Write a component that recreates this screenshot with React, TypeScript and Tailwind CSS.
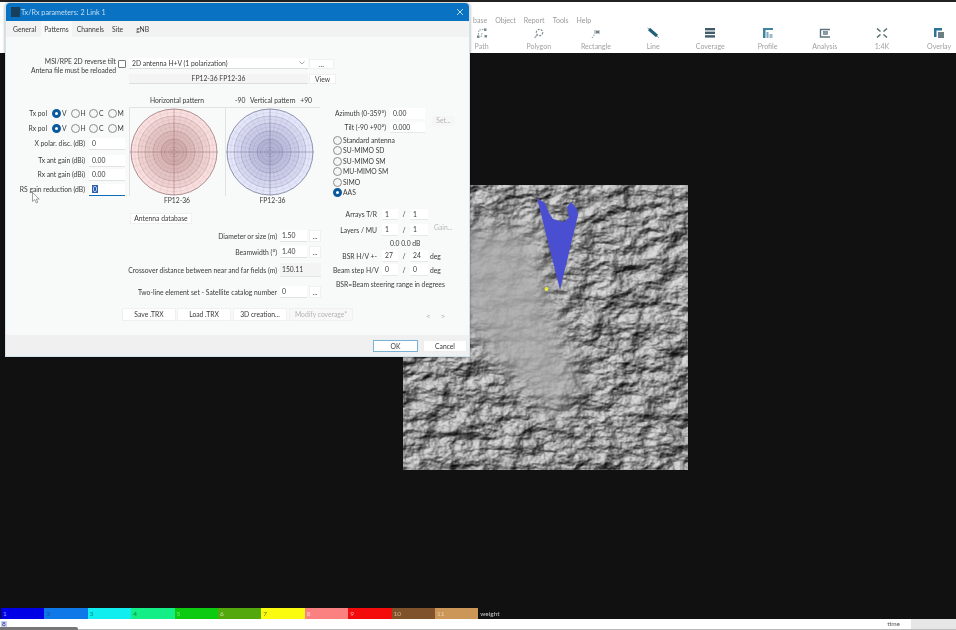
import React from "react";

const font = { fontFamily: 'Lato, "Open Sans", sans-serif' };

const spokes = Array.from({ length: 36 }, (_, i) => (i * Math.PI * 2) / 36);

function PolarPlot({ base, dark, line }: { base: string; dark: string; line: string }) {
  return (
    <svg width="88" height="88" viewBox="-44 -44 88 88" className="block">
      <circle r="43" fill={base} />
      {[36, 29, 21, 13].map((r) => (
        <circle key={r} r={r} fill={dark} fillOpacity="0.11" />
      ))}
      {spokes.map((a, i) => (
        <line
          key={i}
          x1={Math.cos(a) * 7}
          y1={Math.sin(a) * 7}
          x2={Math.cos(a) * 43}
          y2={Math.sin(a) * 43}
          stroke={line}
          strokeOpacity="0.16"
          strokeWidth="0.5"
        />
      ))}
      {[39.5, 32.5, 25, 17, 9.5].map((r) => (
        <circle key={r} r={r} fill="none" stroke={line} strokeOpacity="0.16" strokeWidth="0.5" />
      ))}
      {[36, 29, 21, 13, 5, 2.5].map((r) => (
        <circle key={r} r={r} fill="none" stroke={line} strokeOpacity="0.42" strokeWidth="0.5" />
      ))}
      <circle r="43" fill="none" stroke={line} strokeOpacity="0.75" strokeWidth="0.7" />
      <line x1="-44" x2="44" y1="0" y2="0" stroke={line} strokeOpacity="0.5" strokeWidth="0.5" />
      <line x1="0" x2="0" y1="-43" y2="43" stroke={line} strokeOpacity="0.5" strokeWidth="0.5" />
    </svg>
  );
}

function Dot({ on }: { on?: boolean }) {
  return (
    <span
      className={
        on
          ? "w-[9px] h-[9px] shrink-0 rounded-full border-[3px] border-[#0b5a9e] bg-white"
          : "w-[9px] h-[9px] shrink-0 rounded-full border border-[#8c8c8c] bg-[#f6f6f6]"
      }
    />
  );
}

function PolRow({ label }: { label: string }) {
  return (
    <div className="flex items-center h-[13px]">
      <span className="w-[41px] text-right">{label}</span>
      <span className="w-[5px]" />
      {["V", "H", "C", "M"].map((m, i) => (
        <span key={m} className="w-[18.5px] flex items-center gap-[1px]">
          <Dot on={i === 0} />
          {m}
        </span>
      ))}
    </div>
  );
}

function GainRow({ label, value, active }: { label: string; value: string; active?: boolean }) {
  return (
    <div className="flex items-center justify-end gap-[4px] h-[13px] pr-[1px]">
      <span className="whitespace-nowrap">{label}</span>
      <span className={`w-[36px] h-[12px] bg-white pl-[3px] flex items-center border-b ${active ? "border-[#0b6cb8]" : "border-[#e2e2e2]"}`}>
        {active ? <span className="bg-[#2a5fb0] text-white px-[1px] leading-[8px]">{value}</span> : value}
      </span>
    </div>
  );
}

function Btn({ label, w, h = "h-[13px]", dim }: { label: string; w: string; h?: string; dim?: boolean }) {
  return (
    <span className={`${w} ${h} shrink-0 flex items-center justify-center border border-[#f0f0f0] ${dim ? "text-[#b4b4b4] bg-[#f8f8f8]" : "bg-white"}`}>
      {label}
    </span>
  );
}

function SizeRow({ label, value, className }: { label: string; value: string; className: string }) {
  return (
    <div className={`flex items-center gap-[3px] h-[12px] ${className}`}>
      <span className="whitespace-nowrap">{label}</span>
      <span className="w-[27px] h-[12px] bg-white border-b border-[#e2e2e2] pl-[2px] flex items-center">{value}</span>
      <span className="ml-[-1px]">
        <Btn label="..." w="w-[12px]" h="h-[12px]" />
      </span>
    </div>
  );
}

function ArrayRow({
  label,
  a,
  b,
  h,
  className,
  tail,
}: {
  label: string;
  a: string;
  b: string;
  h: string;
  className?: string;
  tail?: React.ReactNode;
}) {
  return (
    <div className={`flex items-center ${h} ${className ?? ""}`}>
      <span className="w-[44px] text-right whitespace-nowrap">{label}</span>
      <span className={`ml-[5px] w-[16px] ${h} bg-white border-b border-[#e8e8e8] pl-[3px] flex items-center`}>{a}</span>
      <span className="w-[12px] text-center">/</span>
      <span className={`w-[18px] ${h} bg-white border-b border-[#e8e8e8] pl-[3px] flex items-center`}>{b}</span>
      {tail}
    </div>
  );
}

const tools: { label: string; icon: React.ReactNode }[] = [
  {
    label: "Path",
    icon: (
      <g fill="#7b8a90">
        <path d="M3 10 L4 3 L10 2 M6 10 L7 6" fill="none" stroke="#8b989d" strokeWidth="1" strokeDasharray="1.5 1" />
        <rect x="2" y="8.5" width="2.5" height="2.5" />
        <rect x="9" y="1.5" width="2.5" height="2.5" />
        <rect x="9.5" y="8" width="2.5" height="2.5" />
      </g>
    ),
  },
  {
    label: "Polygon",
    icon: (
      <g fill="none">
        <circle cx="7.5" cy="5.5" r="3.2" stroke="#7b8a90" strokeWidth="1.2" strokeDasharray="2 1.2" />
        <path d="M2.5 11 L5 8" stroke="#a2adb1" strokeWidth="1.2" />
      </g>
    ),
  },
  {
    label: "Rectangle",
    icon: (
      <g>
        <rect x="5" y="3" width="6" height="4" fill="#c3cacd" />
        <rect x="7" y="4" width="3" height="2" fill="#6f7f85" />
        <path d="M3 11 L6 7" stroke="#a2adb1" strokeWidth="1.2" strokeDasharray="1.5 1" />
      </g>
    ),
  },
  {
    label: "Line",
    icon: (
      <g>
        <path d="M3 2 L11 9" stroke="#1f5f78" strokeWidth="3" />
        <path d="M1.5 1 L3 2 M11 9 L13 11" stroke="#8aa3ad" strokeWidth="1" />
      </g>
    ),
  },
  {
    label: "Coverage",
    icon: (
      <g fill="#3f5c68">
        <rect x="2" y="1" width="10" height="2.4" />
        <rect x="2" y="4.6" width="10" height="2.4" />
        <rect x="2" y="8.2" width="10" height="2.4" />
      </g>
    ),
  },
  {
    label: "Profile",
    icon: (
      <g fill="#3f85a0">
        <rect x="2" y="1" width="10" height="2" />
        <rect x="2" y="3" width="2.5" height="8" />
        <rect x="5.5" y="5" width="2" height="6" fill="#7ea9ba" />
        <rect x="8.5" y="7" width="3" height="4" fill="#9dbcc9" />
      </g>
    ),
  },
  {
    label: "Analysis",
    icon: (
      <g fill="none" stroke="#5c747d">
        <path d="M12 2.5 H2.5 V10 H12" strokeWidth="1.4" />
        <rect x="5.5" y="4.5" width="4" height="3" fill="#8a9ca3" strokeWidth="0.6" />
      </g>
    ),
  },
  {
    label: "1:4K",
    icon: (
      <g fill="none" stroke="#55686f" strokeWidth="1.5">
        <path d="M2 1.5 L5.5 4.5 M12 1.5 L8.5 4.5 M2 10.5 L5.5 7.5 M12 10.5 L8.5 7.5" />
      </g>
    ),
  },
  {
    label: "Overlay",
    icon: (
      <g>
        <path d="M2 1 H10 V3.5 H4.5 V10 H2 Z" fill="#2c7496" />
        <rect x="6" y="5" width="6" height="6" fill="#6d7d84" />
      </g>
    ),
  },
];

const legend = [
  ["1", "bg-[#0000e6]", "text-[#8fa0ff]"],
  ["2", "bg-[#0f78e8]", "text-[#1a4fa0]"],
  ["3", "bg-[#10eef0]", "text-[#0b7f80]"],
  ["4", "bg-[#14ee86]", "text-[#0a7f48]"],
  ["5", "bg-[#0ccb10]", "text-[#7fe87f]"],
  ["6", "bg-[#52a80c]", "text-[#bfe89a]"],
  ["7", "bg-[#fbfb10]", "text-[#6a6a10]"],
  ["8", "bg-[#fb8080]", "text-[#ffd0d0]"],
  ["9", "bg-[#f40c0c]", "text-[#ffb0b0]"],
  ["10", "bg-[#80522c]", "text-[#d8b090]"],
  ["11", "bg-[#cc9658]", "text-[#ecd0a8]"],
];

function Terrain() {
  return (
    <svg width="285" height="285" viewBox="0 0 285 285" className="block">
      <defs>
        <filter id="relief" x="0" y="0" width="100%" height="100%" colorInterpolationFilters="sRGB">
          <feTurbulence type="fractalNoise" baseFrequency="0.04 0.06" numOctaves="6" seed="23" />
          <feColorMatrix type="matrix" values="0 0 0 0 0 0 0 0 0 0 0 0 0 0 0 1 0 0 0 0" />
          <feDiffuseLighting surfaceScale="5" lightingColor="#ffffff" diffuseConstant="0.95">
            <feDistantLight azimuth="225" elevation="55" />
          </feDiffuseLighting>
          <feComponentTransfer>
            <feFuncR type="gamma" amplitude="0.95" exponent="1.9" offset="0" />
            <feFuncG type="gamma" amplitude="0.95" exponent="1.9" offset="0" />
            <feFuncB type="gamma" amplitude="0.95" exponent="1.9" offset="0" />
          </feComponentTransfer>
          <feGaussianBlur stdDeviation="0.45" />
        </filter>
        <filter id="soft" x="-30%" y="-30%" width="160%" height="160%">
          <feGaussianBlur stdDeviation="13" />
        </filter>
        <filter id="edge">
          <feGaussianBlur stdDeviation="0.4" />
        </filter>
      </defs>
      <rect width="285" height="285" fill="#888" filter="url(#relief)" />
      <path
        d="M15 60 L60 40 L130 40 L150 110 L175 200 L150 235 L105 190 L55 135 L25 95 Z"
        fill="#adadad"
        fillOpacity="0.85"
        filter="url(#soft)"
      />
      <path
        d="M134 13 L142 18 L146 28 L150 34 L160 37 L166 33 L164 22 L168 17 L174 24 L175 30 L157 105 Z"
        fill="#4a50d0"
        filter="url(#edge)"
      />
      <circle cx="143.5" cy="104" r="2" fill="#e6ea40" />
    </svg>
  );
}

export default function App() {
  return (
    <div className="relative w-[956px] h-[630px] overflow-hidden bg-[#111111] flex flex-col text-[#3a3a3a] blur-[0.35px]" style={font}>
      {/* main window header */}
      <header className="h-[53px] shrink-0 bg-white border-t-2 border-[#222222] pl-[473px] flex flex-col">
        <nav className="h-[20px] pt-[14px] flex gap-[8px] text-[7px] leading-[9px] text-[#9a9a9a]">
          <span>base</span>
          <span>Object</span>
          <span>Report</span>
          <span>Tools</span>
          <span>Help</span>
        </nav>
        <div className="flex -ml-[20px] pt-[5px] text-[7px] text-[#a0a0a0]">
          {tools.map((t) => (
            <div key={t.label} className="w-[57.2px] shrink-0 flex flex-col items-center">
              <svg width="14" height="12" viewBox="0 0 14 12">
                {t.icon}
              </svg>
              <span className="leading-[9px] mt-[3px]">{t.label}</span>
            </div>
          ))}
        </div>
      </header>

      {/* map canvas */}
      <main className="flex-1 pl-[403px] pt-[132px]">
        <Terrain />
      </main>

      {/* colour legend */}
      <footer className="h-[11px] shrink-0 flex items-stretch pl-[1px] text-[6.5px]">
        {legend.map(([n, bg, fg]) => (
          <span key={n} className={`w-[43.4px] ${bg} ${fg} pl-[2px] flex items-center`}>
            {n}
          </span>
        ))}
        <span className="pl-[2px] text-[#c8c8c8] flex items-center">weight</span>
      </footer>
      <div className="h-[11px] shrink-0 bg-white border-b border-[#bbbbbb] flex items-center text-[6.5px] text-[#555555]">
        <span className="ml-[1px] px-[1px] leading-[6px] bg-[#c8d0f0] text-[#2a3a90]">8</span>
        <span className="ml-auto mr-[11px]">time</span>
        <span className="w-[45px] h-full bg-[#e6e6e6]" />
      </div>

      {/* scroll thumb lying on the status bar */}
      <div className="absolute left-0 bottom-0 w-[78px] h-[3px] rounded-tr-[2px] bg-[#777777]" />

      {/* dialog over the main window */}
      <section className="absolute left-[5px] top-[3px] w-[465px] h-[354px] bg-[#f8f9f9] rounded-t-[4px] border-x border-b border-[#cfe3ee] flex flex-col text-[6.75px] leading-[9px] shadow-[0_0_3px_#00000066]">
        <div className="h-[18px] shrink-0 bg-[#0a72c2] rounded-t-[4px] flex items-center pl-[5px] pr-[4px] text-[#c4def2] text-[7.2px]">
          <span className="w-[9px] h-[10px] bg-[#17405f] mr-[1px]" />
          <span>Tx/Rx parameters: 2 Link 1</span>
          <svg className="ml-auto mr-[1px]" width="8" height="8" viewBox="0 0 8 8" stroke="#cfe6f6" strokeWidth="0.9">
            <path d="M1 1 L7 7 M7 1 L1 7" />
          </svg>
        </div>
        <div className="h-[16px] shrink-0 flex gap-[8px] pl-[7px] items-center bg-[#f2f2f2]">
          <span>General</span>
          <span className="bg-[#f8f9f9] px-[3px] -mx-[3px] h-full flex items-center">Patterns</span>
          <span>Channels</span>
          <span>Site</span>
          <span className="ml-[5px]">gNB</span>
        </div>

        <div className="flex-1 flex flex-col">
          {/* antenna selector */}
          <div className="flex mt-[21px]">
            <div className="w-[110px] text-right -mt-[1px] leading-[8.5px] whitespace-nowrap">
              <div>MSI/RPE 2D reverse tilt</div>
              <div>Antena file must be reloaded</div>
            </div>
            <span className="w-[8px] h-[8px] bg-white border border-[#777777] rounded-[1px] ml-[2px] mt-[2px]" />
            <div className="ml-[3px] flex flex-col gap-[5px]">
              <div className="flex gap-[1px]">
                <span className="w-[179px] h-[11px] bg-white border-b border-[#dddddd] px-[3px] flex items-center justify-between">
                  2D antenna H+V (1 polarization)
                  <svg width="6" height="4" viewBox="0 0 6 4" fill="none" stroke="#aaaaaa">
                    <path d="M0.5 0.5 L3 3 L5.5 0.5" />
                  </svg>
                </span>
                <span className="mt-[1px]">
                  <Btn label="..." w="w-[25px]" h="h-[10px]" />
                </span>
              </div>
              <div className="flex gap-[1px]">
                <span className="w-[179px] h-[10px] bg-[#f4f4f4] border-b border-[#dddddd] flex items-center justify-center">
                  FP12-36 FP12-36
                </span>
                <Btn label="View" w="w-[27px]" h="h-[10px]" />
              </div>
            </div>
          </div>

          {/* two columns */}
          <div className="flex mt-[11px]">
            <div className="w-[317px] shrink-0 flex flex-col">
              <div className="flex">
                <div className="w-[120px] pt-[12px] flex flex-col">
                  <PolRow label="Tx pol" />
                  <div className="mt-[2px]">
                    <PolRow label="Rx pol" />
                  </div>
                  <div className="mt-[2px]">
                    <GainRow label="X polar. disc. (dB)" value="0" />
                  </div>
                  <div className="mt-[4px]">
                    <GainRow label="Tx ant gain (dBi)" value="0.00" />
                  </div>
                  <div className="mt-[1px]">
                    <GainRow label="Rx ant gain (dBi)" value="0.00" />
                  </div>
                  <div className="mt-[2px]">
                    <GainRow label="RS gain reduction (dB)" value="0" active />
                  </div>
                </div>

                <div className="ml-[3px] w-[191px] text-center">
                  <div className="flex h-[12px] items-start pt-[1px] whitespace-nowrap">
                    <span className="w-[96px]">Horizontal pattern</span>
                    <span className="ml-[10px] w-[77px] flex justify-between">
                      <span>-90</span>
                      <span>Vertical pattern</span>
                      <span>+90</span>
                    </span>
                  </div>
                  <div className="flex border-t border-[#e2e2e2]">
                    <div className="w-[96px] flex flex-col">
                      <div className="border-l border-[#e2e2e2] h-[88px]">
                        <PolarPlot base="#f9dfdf" dark="#9c6666" line="#6e3c3c" />
                      </div>
                      <span>FP12-36</span>
                    </div>
                    <div className="w-[95px] flex flex-col">
                      <div className="border-l border-[#e2e2e2] h-[88px]">
                        <PolarPlot base="#e4e6fa" dark="#6a6ea8" line="#3e4068" />
                      </div>
                      <span>FP12-36</span>
                    </div>
                  </div>
                </div>
              </div>

              {/* lower left rows */}
              <div className="ml-[124px] mt-[8px]">
                <Btn label="Antenna database" w="w-[62px]" h="h-[11px]" />
              </div>
              <div className="flex flex-col items-end pr-[2px]">
                <SizeRow label="Diameter or size (m)" value="1.50" className="mt-[6px]" />
                <SizeRow label="Beamwidth (°)" value="1.40" className="mt-[4px]" />
                <div className="flex items-center gap-[3px] h-[14px] mt-[5px]">
                  <span className="whitespace-nowrap">Crossover distance between near and far fields (m)</span>
                  <span className="w-[41px] h-[14px] pl-[2px] flex items-center border-b border-[#e6e6e6] bg-[#f4f4f4]">150.11</span>
                </div>
                <SizeRow label="Two-line element set - Satellite catalog number" value="0" className="mt-[9px]" />
              </div>
            </div>

            <div className="ml-[10px] flex-1 pt-[13px] flex flex-col">
              <div className="flex items-center h-[11px]">
                <span className="w-[53px] text-right whitespace-nowrap">Azimuth (0-359°)</span>
                <span className="ml-[4px] w-[35px] h-[11px] bg-white pl-[3px] flex items-center">0.00</span>
              </div>
              <div className="flex items-center h-[11px] mt-[3px]">
                <span className="w-[53px] text-right whitespace-nowrap">Tilt (-90 +90°)</span>
                <span className="ml-[4px] w-[35px] h-[11px] bg-white border-b border-[#e8e8e8] pl-[3px] flex items-center">0.000</span>
                <span className="ml-[7px] w-[23px] h-[10px] -translate-y-[7px] bg-[#f6f6f6] text-[#b4b4b4] flex items-center justify-center">Set...</span>
              </div>
              <div className="mt-[2px]">
                {["Standard antenna", "SU-MIMO SD", "SU-MIMO SM", "MU-MIMO SM", "SIMO", "AAS"].map((m) => (
                  <div key={m} className="h-[10.5px] flex items-center gap-[1px]">
                    <Dot on={m === "AAS"} />
                    {m}
                  </div>
                ))}
              </div>
              <ArrayRow label="Arrays T/R" a="1" b="1" h="h-[11px]" className="mt-[11px]" />
              <ArrayRow
                label="Layers / MU"
                a="1"
                b="1"
                h="h-[12px]"
                className="mt-[4px]"
                tail={<span className="ml-[6px] -translate-y-[3px] text-[#b8b8b8]">Gain...</span>}
              />
              <div className="h-[8px] mt-[3px] ml-[57px] leading-[8px]">0.0 0.0 dB</div>
              <ArrayRow
                label="BSR H/V +-"
                a="27"
                b="24"
                h="h-[12px]"
                className="mt-[3px]"
                tail={<span className="ml-[2px]">deg</span>}
              />
              <ArrayRow
                label="Beam step H/V"
                a="0"
                b="0"
                h="h-[12px]"
                className="mt-[2px]"
                tail={<span className="ml-[2px]">deg</span>}
              />
              <div className="mt-[3px] ml-[3px] h-[10px] leading-[10px] whitespace-nowrap">BSR=Beam steering range in degrees</div>
            </div>
          </div>

          {/* buttons */}
          <div className="flex items-center mt-[10px] ml-[116px]">
            <Btn label="Save .TRX" w="w-[54px]" />
            <span className="ml-[1px]">
              <Btn label="Load .TRX" w="w-[54px]" />
            </span>
            <span className="ml-[2px]">
              <Btn label="3D creation..." w="w-[54px]" />
            </span>
            <span className="ml-[2px]">
              <Btn label="Modify coverage*" w="w-[64px]" dim />
            </span>
            <span className="ml-[73px] translate-y-[2px] text-[8px] text-[#a8a8a8]">&lt;</span>
            <span className="ml-[10px] translate-y-[2px] text-[8px] text-[#a8a8a8]">&gt;</span>
          </div>
        </div>

        <div className="h-[21px] shrink-0 bg-[#f0f0f0] flex items-start pt-[5px] justify-end gap-[5px] pr-[2px]">
          <span className="w-[45px] h-[12px] bg-white border border-[#7ab2d6] flex items-center justify-center">OK</span>
          <span className="w-[44px] h-[12px] bg-white border border-[#eeeeee] flex items-center justify-center">Cancel</span>
        </div>
      </section>

      {/* mouse pointer */}
      <svg className="absolute left-[32px] top-[192px]" width="9" height="12" viewBox="0 0 9 12" fill="#ffffff" stroke="#777777" strokeWidth="0.7">
        <path d="M0.5 0.5 V9.5 L2.8 7.6 L4.4 11 L5.8 10.3 L4.3 7.1 L7.2 7 Z" />
      </svg>
    </div>
  );
}
